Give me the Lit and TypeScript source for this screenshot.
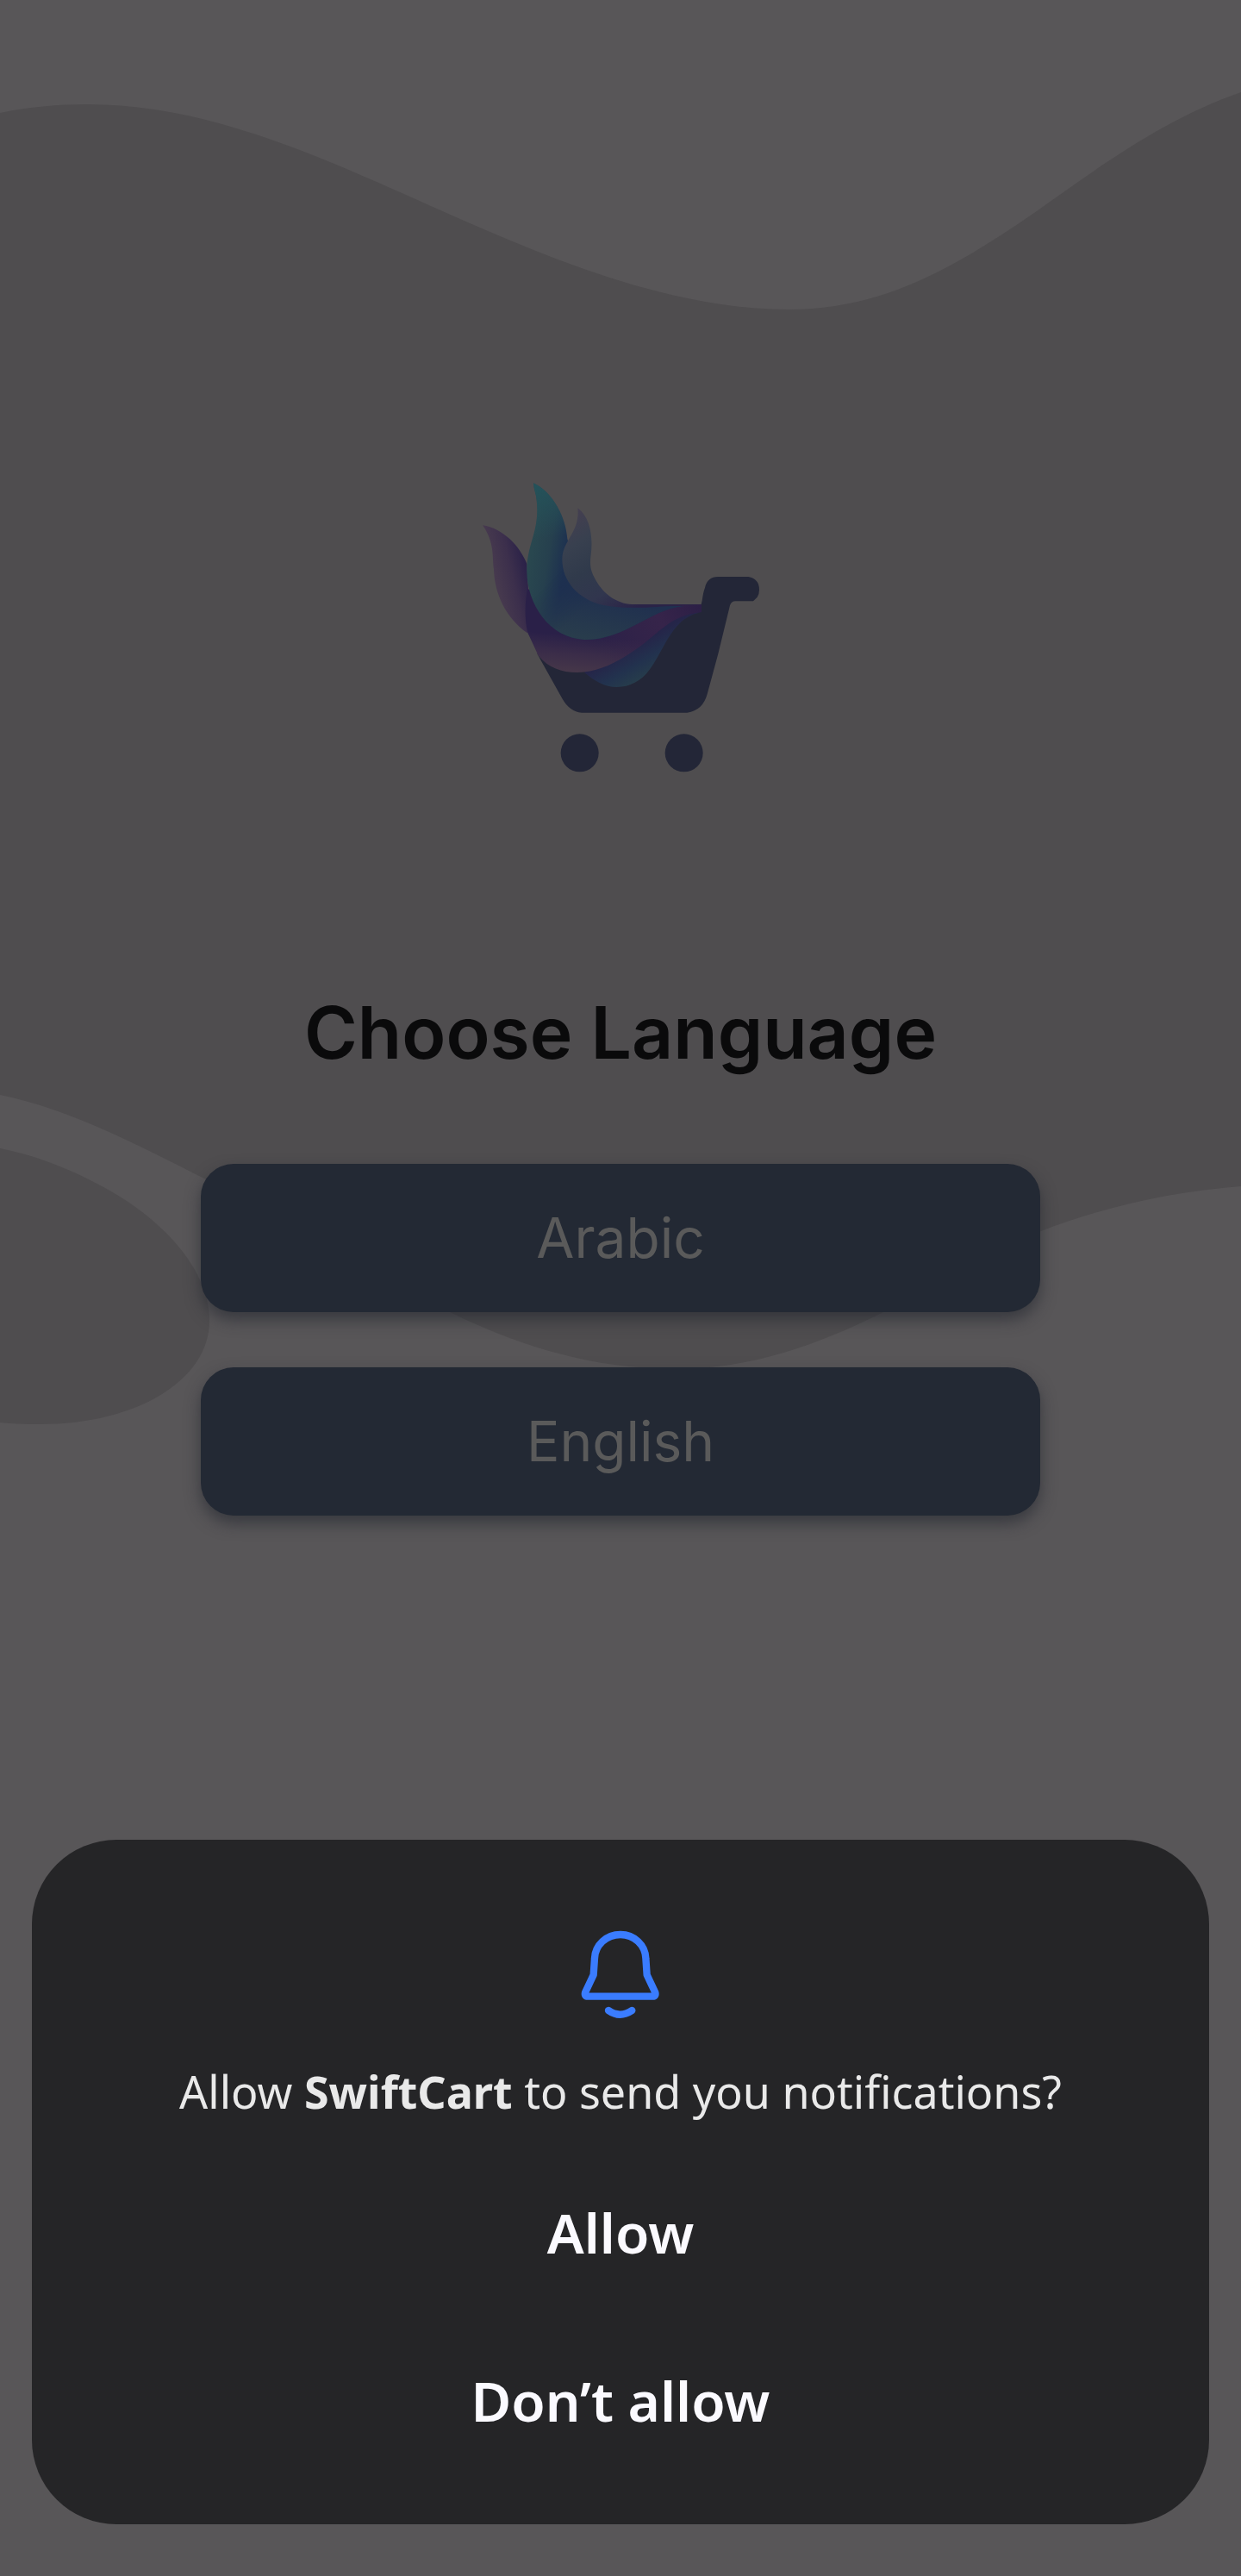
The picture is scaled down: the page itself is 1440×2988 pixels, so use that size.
import { LitElement, html, css, svg } from "lit";
import { customElement, property, state } from "lit/decorators.js";

/** Soft wave shapes behind the language picker. */
@customElement("wave-backdrop")
export class WaveBackdrop extends LitElement {
  static styles = css`
    :host {
      display: block;
    }
    .waves {
      display: block;
      width: 100%;
      height: 100%;
    }
    .band {
      fill: #4f4d4f;
    }
  `;

  render() {
    return html`
      <svg class="waves" viewBox="0 0 1440 2988" preserveAspectRatio="none" aria-hidden="true">
        <path
          class="band"
          d="M0 131 C33 124 67 121 101 121 C230 121 350 172 480 230 C620 293 770 359 915 359 C1030 359 1115 305 1200 247 C1275 194 1350 138 1440 107 V1376 C1360 1382 1280 1400 1208 1428 C1100 1470 960 1588 785 1588 C660 1588 560 1544 480 1500 C400 1456 320 1408 237 1367 C160 1328 80 1286 0 1270 Z"
        />
        <path
          class="band"
          d="M0 1332 C50 1342 92 1361 129 1382 C190 1417 243 1473 243 1532 C243 1600 160 1652 46 1652 Q20 1652 0 1650 Z"
        />
      </svg>
    `;
  }
}

/** SwiftCart mark: a shopping cart with flowing feathers. */
@customElement("swift-cart-logo")
export class SwiftCartLogo extends LitElement {
  static styles = css`
    :host {
      display: block;
    }
    .mark {
      display: block;
      width: 100%;
    }
    .body {
      fill: #232637;
    }
  `;

  private stops(colors: string[]) {
    return colors.map(
      (c, i) => svg`<stop offset=${i / (colors.length - 1)} stop-color=${c}></stop>`
    );
  }

  render() {
    return html`
      <svg class="mark" viewBox="0 0 1080 1110" role="img" aria-label="SwiftCart">
        <defs>
          <linearGradient id="left" gradientUnits="userSpaceOnUse" x1="110" y1="400" x2="220" y2="375">
            ${this.stops(["#46394e", "#3c2f4c", "#2a2148"])}
          </linearGradient>
          <linearGradient id="teal" gradientUnits="userSpaceOnUse" x1="225" y1="330" x2="345" y2="350">
            ${this.stops(["#29474f", "#26404e", "#1d3050"])}
          </linearGradient>
          <linearGradient id="tealtop" gradientUnits="userSpaceOnUse" x1="260" y1="60" x2="290" y2="250">
            <stop offset="0" stop-color="#24525a"></stop>
            <stop offset="1" stop-color="#24525a" stop-opacity="0"></stop>
          </linearGradient>
          <linearGradient id="teallow" gradientUnits="userSpaceOnUse" x1="455" y1="450" x2="420" y2="610">
            <stop offset="0" stop-color="#20304f"></stop>
            <stop offset="1" stop-color="#293d4c"></stop>
          </linearGradient>
          <linearGradient id="fadein" gradientUnits="userSpaceOnUse" x1="300" y1="400" x2="400" y2="500">
            <stop offset="0" stop-color="#000"></stop>
            <stop offset="1" stop-color="#fff"></stop>
          </linearGradient>
          <mask id="lowmask"><rect width="1080" height="1110" fill="url(#fadein)"></rect></mask>
          <linearGradient id="small" gradientUnits="userSpaceOnUse" x1="400" y1="150" x2="600" y2="490">
            ${this.stops(["#443f50", "#38404f", "#303a4b", "#31364e", "#2a2347"])}
          </linearGradient>
          <linearGradient id="plum" gradientUnits="userSpaceOnUse" x1="390" y1="590" x2="380" y2="720">
            ${this.stops(["#2a2048", "#3a2c49", "#463749"])}
          </linearGradient>
          <linearGradient id="plumright" gradientUnits="userSpaceOnUse" x1="480" y1="650" x2="820" y2="490">
            <stop offset="0" stop-color="#382649" stop-opacity="0"></stop>
            <stop offset="0.6" stop-color="#36244a"></stop>
            <stop offset="1" stop-color="#2c1f46"></stop>
          </linearGradient>
          <linearGradient id="under" gradientUnits="userSpaceOnUse" x1="540" y1="655" x2="600" y2="760">
            ${this.stops(["#252549", "#22324e", "#273e4b"])}
          </linearGradient>
        </defs>
        <path
          class="body"
          d="M250 655 L560 483 H821 L824 470 Q828 440 834 425 Q842 387 880 387 H985 Q1023 394 1023 432 Q1023 448 1016 458 L1002 472 H940 Q926 472 921 487 L880 655 L842 795 Q827 852 772 860 H405 Q362 855 338 812 Z"
        />
        <circle class="body" cx="398" cy="1000" r="66" />
        <circle class="body" cx="761" cy="1000" r="66" />
        <path
          fill="url(#under)"
          d="M414 720 C450 750 485 771 527 771 C572 771 612 750 640 712 C682 655 700 592 750 545 C770 527 795 515 815 512 L760 505 L560 620 Z"
        />
        <path
          fill="url(#left)"
          d="M60 208 C130 218 190 280 214 342 L222 480 L216 583 C140 530 101 445 99 360 C93 320 103 270 60 208 Z"
        />
        <path
          fill="url(#plum)"
          d="M216 430 C208 470 204 530 217 582 C230 610 242 635 253 660 C285 700 330 720 390 720 C475 720 555 668 610 628 C680 575 720 520 822 510 V483 L700 489 L560 500 L280 440 Z"
        />
        <path
          fill="url(#plumright)"
          d="M216 430 C208 470 204 530 217 582 C230 610 242 635 253 660 C285 700 330 720 390 720 C475 720 555 668 610 628 C680 575 720 520 822 510 V483 L700 489 L560 500 L280 440 Z"
        />
        <path
          fill="url(#teal)"
          d="M237 61 C305 93 350 180 355 255 C380 370 470 470 560 490 L760 489 C640 500 560 606 415 606 C290 600 215 480 214 370 C213 270 260 230 248 120 C247 100 237 80 237 61 Z"
        />
        <path
          fill="url(#tealtop)"
          d="M237 61 C305 93 350 180 355 255 C380 370 470 470 560 490 L760 489 C640 500 560 606 415 606 C290 600 215 480 214 370 C213 270 260 230 248 120 C247 100 237 80 237 61 Z"
        />
        <path
          fill="url(#teallow)"
          mask="url(#lowmask)"
          d="M237 61 C305 93 350 180 355 255 C380 370 470 470 560 490 L760 489 C640 500 560 606 415 606 C290 600 215 480 214 370 C213 270 260 230 248 120 C247 100 237 80 237 61 Z"
        />
        <path
          fill="url(#small)"
          d="M391 148 C435 180 445 250 437 310 C432 350 437 365 448 388 C476 445 525 481 580 483 H821 L700 490 C620 495 540 498 480 486 C390 465 336 400 337 325 C338 260 400 230 391 148 Z"
        />
      </svg>
    `;
  }
}

/** Notification permission sheet. */
@customElement("permission-sheet")
export class PermissionSheet extends LitElement {
  @property() app = "";

  static styles = css`
    :host {
      display: block;
    }
    .sheet {
      box-sizing: border-box;
      display: flex;
      flex-direction: column;
      align-items: center;
      padding: 84px 48px 46px;
      border-radius: 98px;
      background: #252527;
      color: #fbfaff;
      font-family: "Noto Sans", sans-serif;
    }
    .bell {
      display: block;
      width: 120px;
      height: 130px;
      fill: none;
      stroke: #3a7cff;
      stroke-width: 25;
      stroke-linecap: round;
      stroke-linejoin: round;
    }
    .message {
      margin: 40px 0 28px;
      font-size: 52px;
      line-height: 76px;
      font-weight: 400;
      text-align: center;
      color: #e9e9e9;
    }
    .name {
      font-weight: 700;
    }
    .action {
      width: 100%;
      height: 195px;
      padding: 0;
      border: 0;
      background: none;
      color: inherit;
      font: 600 64px / 88px "Noto Sans", sans-serif;
      cursor: pointer;
    }
  `;

  private choose(choice: string) {
    this.dispatchEvent(new CustomEvent("choice", { detail: choice, bubbles: true }));
  }

  render() {
    return html`
      <section class="sheet" role="dialog" aria-labelledby="message">
        <svg class="bell" viewBox="0 0 360 390" aria-hidden="true">
          <path
            d="M180 78 C130 78 92 115 90 160 L86 218 L57 280 Q54 293 66 293 H292 Q304 293 301 280 L272 218 L268 160 C266 115 228 78 180 78 Z"
          />
          <path d="M138 342 Q178 370 220 342" />
        </svg>
        <p class="message" id="message">
          Allow <strong class="name">${this.app}</strong> to send you notifications?
        </p>
        <button class="action" type="button" @click=${() => this.choose("allow")}>Allow</button>
        <button class="action" type="button" @click=${() => this.choose("deny")}>Don’t allow</button>
      </section>
    `;
  }
}

@customElement("app-root")
export class AppRoot extends LitElement {
  @state() private language = "";

  private languages = ["Arabic", "English"];

  static styles = css`
    :host {
      display: block;
    }
    .screen {
      position: relative;
      box-sizing: border-box;
      display: flex;
      flex-direction: column;
      justify-content: space-between;
      min-height: 100vh;
      padding: 540px 37px 60px;
      background: #585658;
      font-family: Inter, sans-serif;
    }
    .backdrop {
      position: absolute;
      inset: 0;
    }
    .picker,
    .sheet {
      position: relative;
    }
    .picker {
      display: flex;
      flex-direction: column;
      align-items: center;
      align-self: center;
      width: 100%;
      max-width: 974px;
    }
    .logo {
      width: 360px;
    }
    .title {
      margin: 238px 0 102px;
      font-size: 84px;
      line-height: 100px;
      font-weight: 600;
      text-align: center;
      color: #0a0a0b;
    }
    .options {
      display: flex;
      flex-direction: column;
      gap: 64px;
      width: 100%;
    }
    .option {
      height: 172px;
      padding: 0;
      border: 0;
      border-radius: 38px;
      background: #232934;
      box-shadow: 0 9px 18px rgba(35, 38, 46, 0.6);
      color: #5a5a5a;
      font: 400 64px / 80px Inter, sans-serif;
      cursor: pointer;
    }
  `;

  render() {
    return html`
      <main class="screen" lang="en">
        <wave-backdrop class="backdrop"></wave-backdrop>
        <div class="picker">
          <swift-cart-logo class="logo"></swift-cart-logo>
          <h1 class="title">Choose Language</h1>
          <div class="options">
            ${this.languages.map(
              (name) => html`
                <button
                  class="option"
                  type="button"
                  aria-pressed=${this.language === name}
                  @click=${() => (this.language = name)}
                >
                  ${name}
                </button>
              `
            )}
          </div>
        </div>
        <permission-sheet class="sheet" app="SwiftCart"></permission-sheet>
      </main>
    `;
  }
}
